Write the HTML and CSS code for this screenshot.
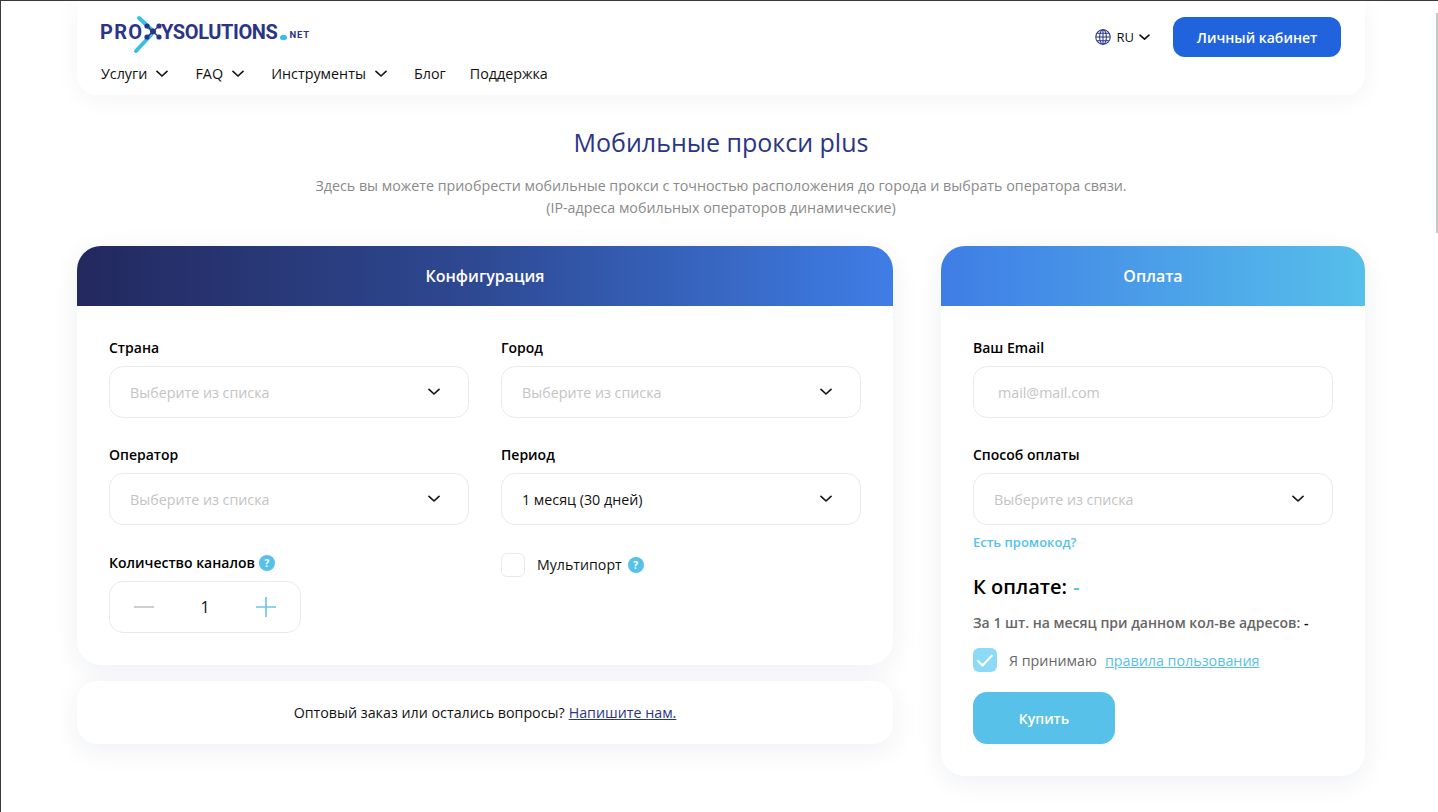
FILE: index.html
```html
<!DOCTYPE html>
<html lang="ru">
<head>
<meta charset="utf-8">
<title>Мобильные прокси plus</title>
<link rel="stylesheet" href="styles.css">
</head>
<body>
<div class="scrollbar"></div>
<div class="wrap">
  <header class="header">
    <div class="header-top">
      <a class="logo">
        <span class="logo-pro">PRO</span>
        <svg class="logo-x" width="36" height="46" viewBox="0 0 36 46">
          <path d="M8 42 23 26" stroke="#38bfe6" stroke-width="4" stroke-linecap="round"/>
          <path d="M11 9 25 22" stroke="#38bfe6" stroke-width="4" stroke-linecap="round"/>
          <path d="M19 17 31 28M31 17 19 28" stroke="#2b3486" stroke-width="1.400"/>
          <circle cx="25" cy="22.500" r="3" fill="#2b3486"/>
          <circle cx="19" cy="17" r="2.600" fill="#2b3486"/>
          <circle cx="31" cy="17" r="2.600" fill="#2b3486"/>
          <circle cx="19" cy="28" r="2.600" fill="#2b3486"/>
          <circle cx="31" cy="28" r="2.600" fill="#2b3486"/>
        </svg>
        <span class="logo-sol">YSOLUTIONS</span>
        <span class="logo-dot"></span>
        <span class="logo-net">NET</span>
      </a>
      <div class="header-right">
        <div class="lang">
          <svg width="16" height="16" viewBox="0 0 17 17" fill="none" stroke="#2b3486" stroke-width="1.100">
            <circle cx="8.5" cy="8.5" r="7.700"/>
            <ellipse cx="8.5" cy="8.5" rx="3.600" ry="7.700"/>
            <path d="M8.500 .8v15.400M.8 8.500h15.400M2 4.600h13M2 12.400h13"/>
          </svg>
          <span>RU</span>
          <svg width="11" height="7" viewBox="0 0 11 7" fill="none"><path d="M1 1.200 5.500 5.200 10 1.200" stroke="#111" stroke-width="1.6" stroke-linecap="round" stroke-linejoin="round"/></svg>
        </div>
        <a class="cabinet">Личный кабинет</a>
      </div>
    </div>
    <nav class="nav">
      <a class="nav-item has-sub">Услуги <svg width="12" height="8" viewBox="0 0 12 8" fill="none"><path d="M1 1.400 6 6 11 1.400" stroke="#111" stroke-width="1.6" stroke-linecap="round" stroke-linejoin="round"/></svg></a>
      <a class="nav-item has-sub">FAQ <svg width="12" height="8" viewBox="0 0 12 8" fill="none"><path d="M1 1.400 6 6 11 1.400" stroke="#111" stroke-width="1.6" stroke-linecap="round" stroke-linejoin="round"/></svg></a>
      <a class="nav-item has-sub">Инструменты <svg width="12" height="8" viewBox="0 0 12 8" fill="none"><path d="M1 1.400 6 6 11 1.400" stroke="#111" stroke-width="1.6" stroke-linecap="round" stroke-linejoin="round"/></svg></a>
      <a class="nav-item">Блог</a>
      <a class="nav-item">Поддержка</a>
    </nav>
  </header>

  <h1 class="title">Мобильные прокси plus</h1>
  <p class="lead">Здесь вы можете приобрести мобильные прокси с точностью расположения до города и выбрать оператора связи.<br>(IP-адреса мобильных операторов динамические)</p>

  <div class="columns">
    <div class="col-left">
      <section class="card">
        <div class="card-head head-config">Конфигурация</div>
        <div class="config-grid">
          <div class="field">
            <label class="label">Страна</label>
            <div class="select"><span class="ph">Выберите из списка</span><svg width="12" height="8" viewBox="0 0 12 8" fill="none"><path d="M1 1.400 6 6 11 1.400" stroke="#111" stroke-width="1.6" stroke-linecap="round" stroke-linejoin="round"/></svg></div>
          </div>
          <div class="field">
            <label class="label">Город</label>
            <div class="select"><span class="ph">Выберите из списка</span><svg width="12" height="8" viewBox="0 0 12 8" fill="none"><path d="M1 1.400 6 6 11 1.400" stroke="#111" stroke-width="1.6" stroke-linecap="round" stroke-linejoin="round"/></svg></div>
          </div>
          <div class="field">
            <label class="label">Оператор</label>
            <div class="select"><span class="ph">Выберите из списка</span><svg width="12" height="8" viewBox="0 0 12 8" fill="none"><path d="M1 1.400 6 6 11 1.400" stroke="#111" stroke-width="1.6" stroke-linecap="round" stroke-linejoin="round"/></svg></div>
          </div>
          <div class="field">
            <label class="label">Период</label>
            <div class="select"><span class="val">1 месяц (30 дней)</span><svg width="12" height="8" viewBox="0 0 12 8" fill="none"><path d="M1 1.400 6 6 11 1.400" stroke="#111" stroke-width="1.6" stroke-linecap="round" stroke-linejoin="round"/></svg></div>
          </div>
          <div class="field field-tall">
            <label class="label">Количество каналов <span class="help">?</span></label>
            <div class="stepper">
              <svg width="20" height="20" viewBox="0 0 20 20"><path d="M0 10h20" stroke="#c4c4c4" stroke-width="1.6"/></svg>
              <span class="count">1</span>
              <svg width="20" height="20" viewBox="0 0 20 20"><path d="M0 10h20M10 0v20" stroke="#6cc3e8" stroke-width="1.6"/></svg>
            </div>
          </div>
          <div class="multi">
            <span class="box"></span>
            <span class="multi-text">Мультипорт</span>
            <span class="help">?</span>
          </div>
        </div>
      </section>
      <div class="note">Оптовый заказ или остались вопросы? <a class="note-link">Напишите нам.</a></div>
    </div>

    <section class="card card-pay">
      <div class="card-head head-pay">Оплата</div>
      <div class="pay-body">
        <div class="field">
          <label class="label">Ваш Email</label>
          <div class="select input"><span class="ph">mail@mail.com</span></div>
        </div>
        <div class="field">
          <label class="label">Способ оплаты</label>
          <div class="select"><span class="ph">Выберите из списка</span><svg width="12" height="8" viewBox="0 0 12 8" fill="none"><path d="M1 1.400 6 6 11 1.400" stroke="#111" stroke-width="1.6" stroke-linecap="round" stroke-linejoin="round"/></svg></div>
        </div>
        <a class="promo">Есть промокод?</a>
        <div class="total">К оплате: <span class="total-val">-</span></div>
        <div class="per">За 1 шт. на месяц при данном кол-ве адресов: <b>-</b></div>
        <div class="accept">
          <span class="check"><svg width="18" height="15" viewBox="0 0 18 15" fill="none"><path d="M1.500 7.500 6.500 12.500 16.500 2" stroke="#fff" stroke-width="2"/></svg></span>
          <span class="accept-text">Я принимаю</span>
          <a class="rules">правила пользования</a>
        </div>
        <button class="buy">Купить</button>
      </div>
    </section>
  </div>
</div>
</body>
</html>
```
FILE: styles.css
```css
* { box-sizing: border-box; }
html, body { margin: 0; padding: 0; height: 100%; overflow: hidden; }
body {
  background: #fff;
  border-top: 1px solid #3a3a3a;
  border-left: 1px solid #3a3a3a;
  font-family: "Open Sans", "Noto Sans", sans-serif;
  color: #111;
}
.scrollbar {
  position: absolute; right: 0; top: 13px; width: 2px; height: 220px; background: #c4c8c8;
}
.wrap { width: 1288px; margin-left: 76px; }
.header {
  height: 94px;
  background: #fff;
  border-radius: 0 0 20px 20px;
  box-shadow: 0 4px 24px rgba(30, 40, 90, .05);
  padding: 0 24px;
  display: flex;
  flex-direction: column;
}
.header-top { height: 63px; display: flex; justify-content: space-between; align-items: flex-start; }
.logo { display: flex; align-items: center; height: 63px; margin-left: -1px; padding-bottom: 1px; }
.logo-pro { font: 700 20px/1 Roboto, sans-serif; color: #2b3486; letter-spacing: 1.300px; width: 43px; flex: none; }
.logo-sol { font: 700 20px/1 Roboto, sans-serif; color: #2b3486; letter-spacing: -.4px; }
.logo-x { margin: 0 -3px 0 -15px; flex: none; }
.logo-dot { width: 7px; height: 5px; border-radius: 3px; background: #38bfe6; margin: 10px 2px 0 3px; }
.logo-net { font: 700 9.500px/1 Roboto, sans-serif; color: #2b3486; letter-spacing: .8px; margin-top: 5px; }
.header-right { display: flex; align-items: center; gap: 23px; padding-top: 16px; }
.lang { display: flex; align-items: center; gap: 5px; font-size: 13px; }
.cabinet {
  width: 168px; height: 40px; border-radius: 12px; background: #2063dc; color: #fff;
  font-size: 14px; font-weight: 600; display: flex; align-items: center; justify-content: center;
}
.nav { display: flex; gap: 24px; font-size: 14.300px; }
.nav-item { display: flex; align-items: center; gap: 9px; line-height: 20px; white-space: nowrap; }
.has-sub { margin-right: 3.200px; }
.title { margin: 30px 0 0; text-align: center; color: #2b3486; font-size: 25px; font-weight: 400; line-height: 35px; }
.lead { margin: 15px 0 0; text-align: center; color: #8a8a8a; font-size: 14.280px; line-height: 22px; }
.columns { display: flex; justify-content: space-between; align-items: flex-start; margin-top: 27px; }
.col-left { width: 816px; display: flex; flex-direction: column; gap: 16px; }
.card { background: #fff; border-radius: 24px; box-shadow: 0 6px 28px rgba(30, 40, 90, .07); }
.card-pay { width: 424px; }
.card-head {
  height: 60px; border-radius: 24px 24px 0 0; color: #fff; font-size: 16px; font-weight: 600;
  display: flex; align-items: center; justify-content: center;
}
.head-config { background: linear-gradient(90deg, #23285e 0%, #2e4a94 50%, #3f7de6 100%); }
.head-pay { background: linear-gradient(90deg, #3f7de6 0%, #56bfea 100%); }
.config-grid {
  padding: 32px;
  display: grid;
  grid-template-columns: 360px 360px;
  column-gap: 32px;
  row-gap: 27px;
}
.field { display: flex; flex-direction: column; }
.field-tall { padding-top: 1px; }
.label { font-size: 14px; font-weight: 600; line-height: 20px; margin-bottom: 8px; display: flex; align-items: center; gap: 4px; color: #000; }
.help {
  width: 16px; height: 16px; border-radius: 50%; background: #57c1ea; color: #fff; font-size: 10px; font-weight: 700;
  display: inline-flex; align-items: center; justify-content: center; flex: none;
}
.select {
  height: 52px; border: 1px solid #eaeaea; border-radius: 14px; padding: 0 28px 0 20px;
  display: flex; align-items: center; justify-content: space-between; font-size: 14.280px;
}
.input { padding-left: 24px; }
.ph { color: #c4c4c4; }
.val { color: #111; }
.stepper {
  width: 192px; height: 52px; border: 1px solid #eaeaea; border-radius: 14px; padding: 0 24px;
  display: flex; align-items: center; justify-content: space-between;
}
.count { font-size: 16px; }
.multi { display: flex; align-items: flex-start; font-size: 14.200px; margin-top: 1px; }
.box { width: 24px; height: 24px; border: 1px solid #eaeaea; border-radius: 6px; margin-right: 12px; }
.multi-text { line-height: 24px; margin-right: 6px; }
.multi .help { margin-top: 4px; }
.note {
  height: 63px; background: #fff; border-radius: 20px; box-shadow: 0 6px 28px rgba(30, 40, 90, .07);
  display: flex; align-items: center; justify-content: center; gap: 4px; font-size: 14.280px;
}
.note-link { color: #2b3486; text-decoration: underline; }
.pay-body { padding: 32px; display: flex; flex-direction: column; }
.pay-body .field + .field { margin-top: 27px; }
.promo { margin-top: 8px; color: #57c1ea; font-size: 13px; font-weight: 600; line-height: 18px; }
.total { margin-top: 23px; font-size: 20px; font-weight: 600; line-height: 26px; color: #000; }
.total-val { color: #57c1ea; margin-left: 1px; }
.per { margin-top: 13px; font-size: 14px; font-weight: 600; color: #666; line-height: 20px; }
.per b { color: #111; font-weight: 600; }
.accept { margin-top: 15px; display: flex; align-items: center; font-size: 14.300px; color: #666; }
.check {
  width: 24px; height: 24px; border-radius: 6px; background: #8ddaf7; margin-right: 12px;
  display: flex; align-items: center; justify-content: center;
}
.accept-text { margin-right: 8px; }
.rules { color: #57c1ea; text-decoration: underline; }
.buy {
  margin-top: 20px; width: 142px; height: 52px; border: 0; border-radius: 14px; background: #57c1ea; color: #fff;
  font: 600 14px "Open Sans", sans-serif;
}
```
